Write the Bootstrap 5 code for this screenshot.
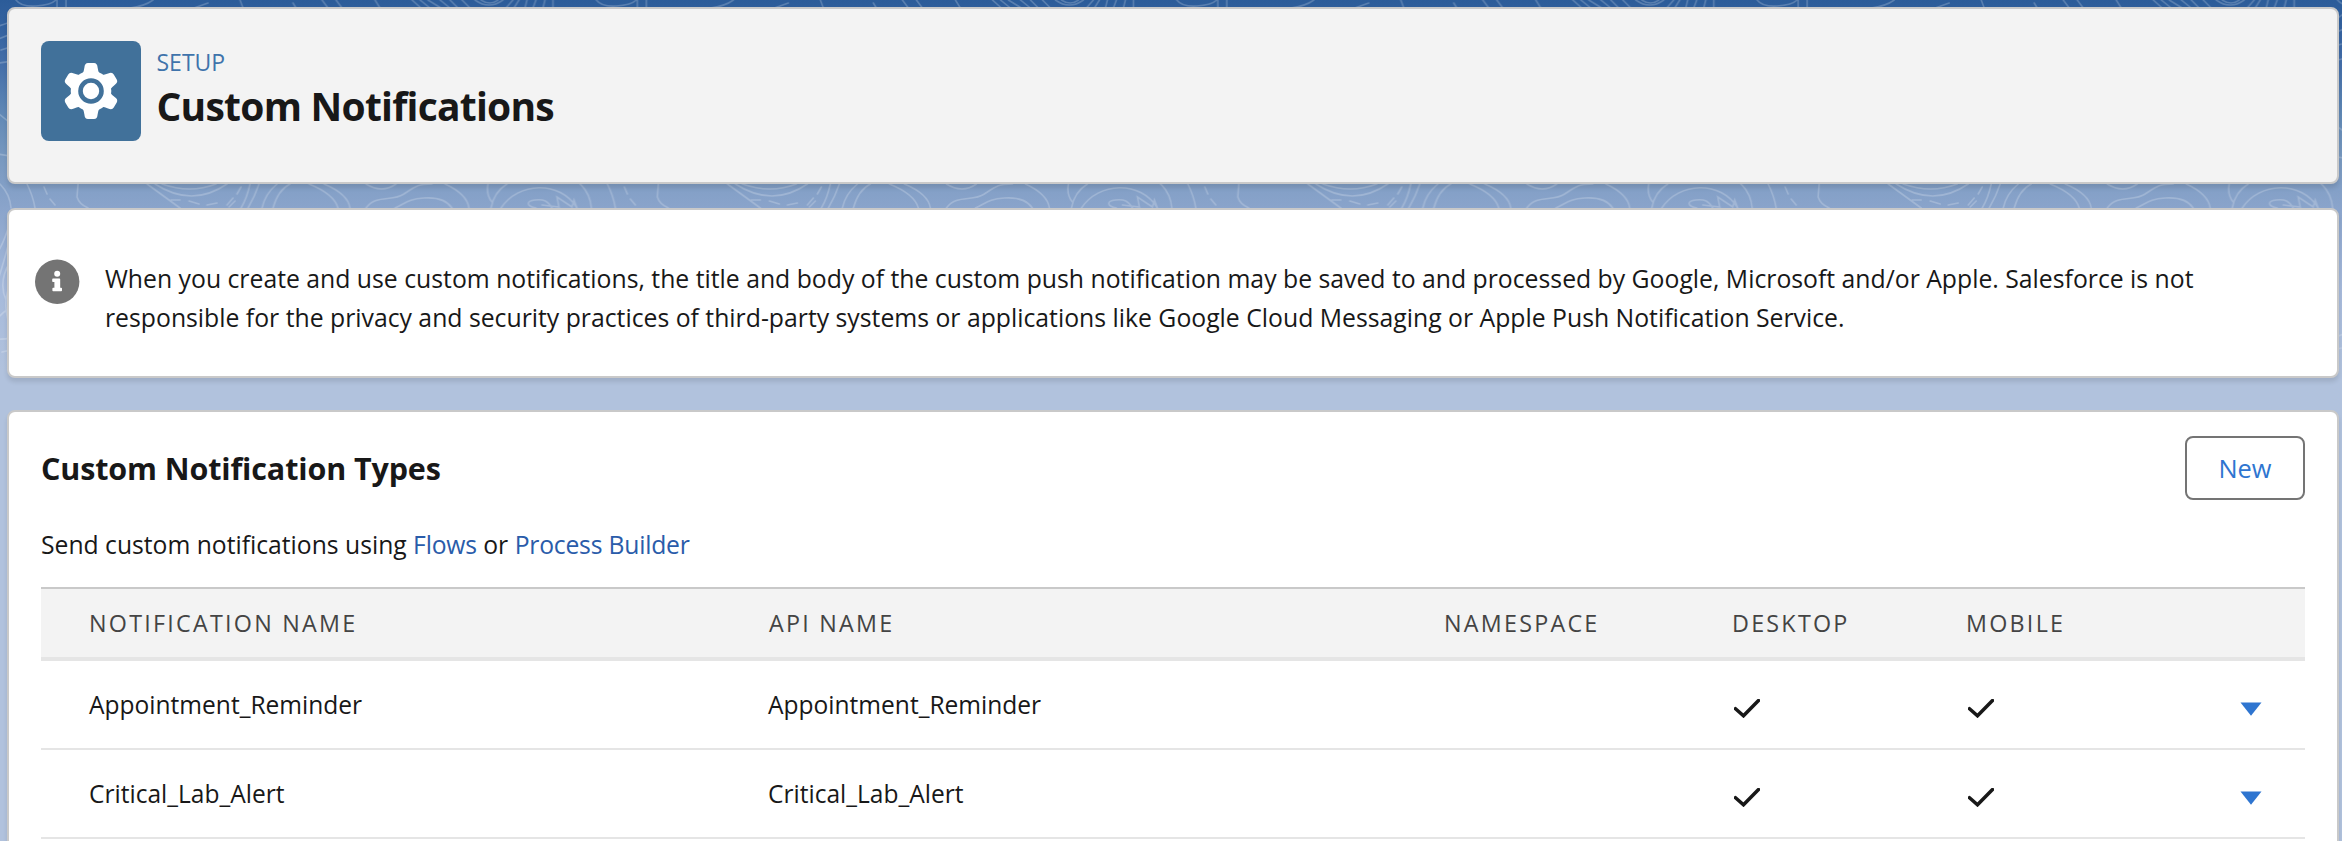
<!DOCTYPE html>
<html lang="en">
<head>
<meta charset="utf-8">
<meta name="viewport" content="width=device-width, initial-scale=1">
<title>Custom Notifications</title>
<link href="https://cdn.jsdelivr.net/npm/bootstrap@5.3.0/dist/css/bootstrap.min.css" rel="stylesheet">
<style>
body{font-family:"Open Sans","Noto Sans",sans-serif;font-size:24.77px;line-height:39px;color:#181818;height:841px;overflow:hidden;
 background:linear-gradient(#2c5c99 0,#3563a0 30px,#4670aa 68px,#6189b6 115px,#7999c0 160px,#8aa4cb 208px,#a6badb 290px,#b1c2dd 370px,#b1c2dd 100%)}
.contours{position:absolute;left:0;top:0;z-index:-1}
.shell{padding:7px 3px 0 7px}
.panel{border:2px solid #c9c9c9;border-radius:8px;background:#fff;box-shadow:0 4px 4px rgba(0,0,0,.1)}
.panel-head{height:177px;background:#f3f3f3;padding:32px;margin-bottom:24px}
.panel-info{height:170px;padding:49px 110px 0 26px;margin-bottom:32px}
.panel-types{height:460px;padding:24px 32px 0}
.tile{width:100px;height:100px;border-radius:8px;background:#41719a}
.head-text{padding:4px 0 0 15.5px}
.eyebrow{font-size:23px;line-height:34px;color:#3f73ab}
h1{font-size:39px;line-height:52px;font-weight:700;letter-spacing:-.76px;margin:1px 0 0}
h2{font-size:30.5px;line-height:40px;font-weight:700;letter-spacing:-.13px;margin:0 0 1px}
.info-text{margin-left:25px;width:2120px}
.send{font-size:24.7px;margin:25px 0 23px}
.send a{color:#2a5caa;text-decoration:none;letter-spacing:-.2px}
.btn-new,.btn-new:hover{width:120px;height:64px;border:2px solid #747474;border-radius:8px;color:#2e75d0;font-size:25.4px;padding:0;background:#fff}
.types{table-layout:fixed;width:2264px;border-collapse:separate;border-spacing:0;color:#181818;font-size:24.55px}
.types th{height:74px;background:#f3f3f3;border-top:2px solid #c9c9c9;border-bottom:4px solid #e5e5e5;font-weight:400;color:#444;font-size:23.3px;letter-spacing:2.25px;padding:0 0 0 48px}
.types td{height:89px;border-bottom:2px solid #e5e5e5;padding:0 0 0 47px}
.types td:first-child{padding-left:48px}
.types svg{display:block;margin:8px 0 0 3px}
.types .caret-cell{padding-right:43px}
.types .caret-cell svg{margin-left:auto;margin-right:0}
</style>
</head>
<body>
<svg class="contours" width="2342" height="420" aria-hidden="true">
 <defs>
  <pattern id="topo" width="580.4" height="420" patternUnits="userSpaceOnUse">
   <g fill="none" stroke="#fff" stroke-opacity=".21" stroke-width="1.6" stroke-linecap="round">
    <!-- band above the header -->
    <path d="M16 0Q21 7 36 6T56 0M57 0V8M66 0V8M130 8Q145 6 153 0M194 8L208 3M240 0L243 8M293 3L296 8M322 0L328 8M336 0L342 8M375 0L380 8M412 0L421 8M420 0L430 8M428 0L441 8M440 0L450 8M450 0L458 8M462 0L470 8M475 0Q489 10 503 0M506 8L513 0M514 8L519 0M525 8L527 0M533 8L536 0M543 8L545 0M553 8V0M481 0Q490 6 498 0"/>
    <!-- band between the header and the notice -->
    <path d="M0 184Q10 194 11 208M27 184Q33 196 35 208M44 187L47 194M50 199L55 205M78 184L77 197Q79 204 88 208M147 184L180 208M155 184Q192 208 227 184M162 184Q190 194 216 184M171 200H180M189 201L199 204M207 205L217 203M227 205L233 198M229 207L235 201M237 194L241 187M250 184Q247 198 241 208M259 184Q255 196 248 208M277 184Q265 194 262 208M273 208Q278 190 290 184M309 184Q334 194 338 208M324 184Q348 194 350 208M366 184Q382 194 396 184M366 208C376 194 392 202 404 194S418 184 432 184M445 184Q467 194 469 208M395 208C406 203 408 199 424 198S448 202 452 208M488 184Q486 195 492 202M491 208Q494 192 507 184M501 208C518 182 560 180 577 208M536 208C526 206 526 201 535 200S548 201 552 208M542 205L559 207L557 197L572 207L574 200L577 208M580 184Q590 194 591 208"/>
    <!-- left and right margins -->
    <path d="M-2 26Q10 24 24 12M-2 39Q10 35 24 28M1 50L20 44M-2 63Q12 62 24 58M-2 113Q10 124 22 131M-2 154L22 158M10 222Q5 240 -2 252M8 246Q2 268 -2 280M10 262Q-2 282 6 300M12 282Q2 298 8 320M10 308Q3 312 -2 318M-2 339Q8 340 22 334M2 352L20 348"/>
   </g>
  </pattern>
 </defs>
 <rect width="2342" height="420" fill="url(#topo)"/>
</svg>

<main class="shell">
 <header class="panel panel-head d-flex align-items-start">
  <div class="tile flex-shrink-0">
   <svg width="100" height="100" viewBox="-50 -50 100 100" class="d-block" aria-hidden="true">
    <defs><path id="tooth" d="M-8.5-17Q-7-20-6.6-23.5Q-6.3-28-3-28H3Q6.3-28 6.6-23.5Q7-20 8.5-17Z"/></defs>
    <g fill="#fff">
     <circle r="20.3"/>
     <use href="#tooth"/><use href="#tooth" transform="rotate(60)"/><use href="#tooth" transform="rotate(120)"/>
     <use href="#tooth" transform="rotate(180)"/><use href="#tooth" transform="rotate(240)"/><use href="#tooth" transform="rotate(300)"/>
    </g>
    <circle r="10.5" fill="none" stroke="#41719a" stroke-width="4.6"/>
   </svg>
  </div>
  <div class="head-text">
   <div class="eyebrow">SETUP</div>
   <h1>Custom Notifications</h1>
  </div>
 </header>

 <section class="panel panel-info d-flex align-items-start">
  <svg class="flex-shrink-0" width="45" height="45" viewBox="0 0 45 45" aria-hidden="true">
   <circle cx="22.2" cy="22.7" r="22.2" fill="#747474"/>
   <circle cx="22.2" cy="14.8" r="3" fill="#fff"/>
   <path d="M18 19.6h6.4q.8 0 .8.8v8.3h1q.8 0 .8.8v2q0 .8-.8.8h-8q-.8 0-.8-.8v-2q0-.8.8-.8h1.200v-5.600h-1.400q-.8 0-.8-.8v-1.900q0-.8.8-.8z" fill="#fff"/>
  </svg>
  <p class="info-text mb-0 flex-shrink-0">When you create and use custom notifications, the title and body of the custom push notification may be saved to and processed by Google, Microsoft and/or Apple. Salesforce is not responsible for the privacy and security practices of third-party systems or applications like Google Cloud Messaging or Apple Push Notification Service.</p>
 </section>

 <section class="panel panel-types">
  <div class="d-flex justify-content-between align-items-center">
   <h2>Custom Notification Types</h2>
   <button type="button" class="btn btn-new">New</button>
  </div>
  <p class="send">Send custom notifications using <a href="#">Flows</a> or <a href="#">Process Builder</a></p>
  <table class="types align-middle">
   <colgroup><col style="width:680px"><col style="width:675px"><col style="width:288px"><col style="width:234px"><col style="width:234px"><col style="width:153px"></colgroup>
   <thead>
    <tr><th>NOTIFICATION NAME</th><th>API NAME</th><th>NAMESPACE</th><th>DESKTOP</th><th>MOBILE</th><th></th></tr>
   </thead>
   <tbody>
    <tr>
     <td>Appointment_Reminder</td><td>Appointment_Reminder</td><td></td>
     <td><svg width="26" height="19" viewBox="0 0 26 19"><path d="M1.500 9.700L9.500 16.800L24.500 1.500" fill="none" stroke="#181818" stroke-width="3.500" stroke-linecap="round"/></svg></td>
     <td><svg width="26" height="19" viewBox="0 0 26 19"><path d="M1.500 9.700L9.500 16.800L24.500 1.500" fill="none" stroke="#181818" stroke-width="3.500" stroke-linecap="round"/></svg></td>
     <td class="caret-cell"><svg width="22" height="14" viewBox="0 0 22 14"><path d="M.5 .5H21.500L11 13.700Z" fill="#2e75d0"/></svg></td>
    </tr>
    <tr>
     <td>Critical_Lab_Alert</td><td>Critical_Lab_Alert</td><td></td>
     <td><svg width="26" height="19" viewBox="0 0 26 19"><path d="M1.500 9.700L9.500 16.800L24.500 1.500" fill="none" stroke="#181818" stroke-width="3.500" stroke-linecap="round"/></svg></td>
     <td><svg width="26" height="19" viewBox="0 0 26 19"><path d="M1.500 9.700L9.500 16.800L24.500 1.500" fill="none" stroke="#181818" stroke-width="3.500" stroke-linecap="round"/></svg></td>
     <td class="caret-cell"><svg width="22" height="14" viewBox="0 0 22 14"><path d="M.5 .5H21.500L11 13.700Z" fill="#2e75d0"/></svg></td>
    </tr>
   </tbody>
  </table>
 </section>
</main>
<script src="https://cdn.jsdelivr.net/npm/bootstrap@5.3.0/dist/js/bootstrap.bundle.min.js"></script>
</body>
</html>
